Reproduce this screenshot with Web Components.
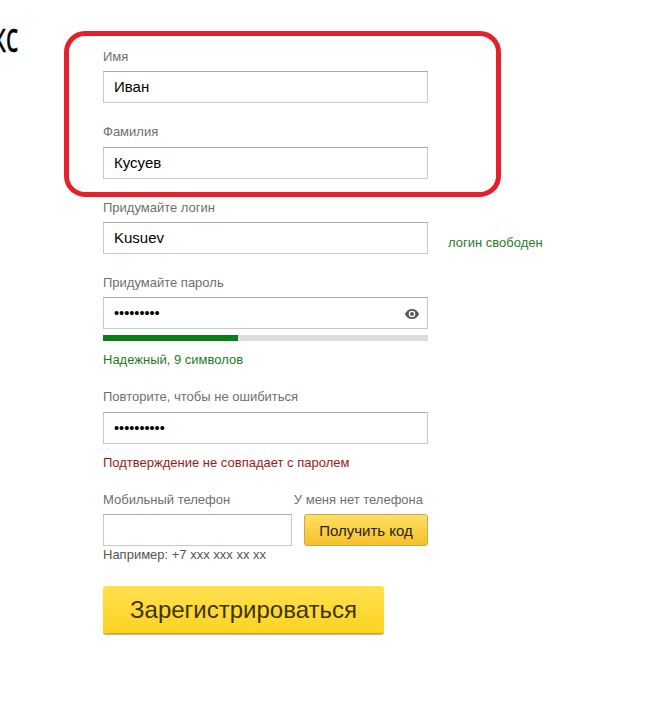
<!DOCTYPE html>
<html lang="ru">
<head>
<meta charset="utf-8">
<title>Регистрация</title>
<style>
html, body { margin: 0; padding: 0; background: #fff; overflow: hidden; }
body { font-family: "Liberation Sans", Arial, sans-serif; }
</style>
</head>
<body>
<reg-page>
  <reg-logo slot="logo">кс</reg-logo>

  <reg-highlight>
    <reg-field label="Имя" style="--top:0">Иван</reg-field>
    <reg-field label="Фамилия" style="--top:21px;--gap:7px">Кусуев</reg-field>
  </reg-highlight>

  <reg-field label="Придумайте логин" style="--top:21px" note="логин свободен">Kusuev</reg-field>

  <reg-field label="Придумайте пароль" style="--top:21px" eye type="password">•••••••••</reg-field>
  <reg-strength value="41.5">Надежный, 9 символов</reg-strength>

  <reg-field label="Повторите, чтобы не ошибиться" style="--top:21px;--gap:7px" type="password">••••••••••</reg-field>
  <reg-message>Подтверждение не совпадает с паролем</reg-message>

  <reg-phone></reg-phone>

  <reg-button>Зарегистрироваться</reg-button>
</reg-page>

<script>
class RegPage extends HTMLElement {
    constructor() {
        super();
        this.attachShadow({ mode: "open" }).innerHTML = `
        <style>
        :host{
            display:grid;
            grid-template-columns:103px 325px;
            width:670px;
            height:713px;
            box-sizing:border-box;
        }
        .form{
            padding-top:49px;
        }
        </style>
        <div><slot name="logo"></slot></div>
        <div class="form"><slot></slot></div>
        `;
    }
}
customElements.define("reg-page", RegPage);

class RegLogo extends HTMLElement {
    constructor() {
        super();
        this.attachShadow({ mode: "open" }).innerHTML = `
        <style>
        :host{
            display:block;
            width:30px;
            margin:13px 0 0 -7px;
            font:400 42px/46px "Open Sans", sans-serif;
            color:#000;
            transform:scaleX(.6);
            transform-origin:left top;
            white-space:nowrap;
            -webkit-text-stroke:.7px #000;
        }
        </style>
        <slot></slot>
        `;
    }
}
customElements.define("reg-logo", RegLogo);

class RegHighlight extends HTMLElement {
    constructor() {
        super();
        this.attachShadow({ mode: "open" }).innerHTML = `
        <style>
        :host{
            display:block;
            position:relative;
        }
        .frame{
            position:absolute;
            left:-39px;
            top:-18px;
            width:437px;
            height:166px;
            box-sizing:border-box;
            border:5px solid #e4202b;
            border-radius:21px;
            pointer-events:none;
        }
        </style>
        <slot></slot>
        <div class="frame"></div>
        `;
    }
}
customElements.define("reg-highlight", RegHighlight);

class RegField extends HTMLElement {
    constructor() {
        super();
        const eye = this.hasAttribute("eye") ? `
        <svg class="eye" width="14" height="10" viewBox="0 0 14 10">
            <path fill-rule="evenodd" fill="#555" d="M7 0C3.8 0 1.2 2 0 5c1.2 3 3.8 5 7 5s5.800-2 7-5c-1.200-3-3.800-5-7-5zm0 1.700a3.300 3.300 0 1 1 0 6.600 3.300 3.300 0 0 1 0-6.600z"/>
            <circle cx="7" cy="5" r="1.900" fill="#555"/>
        </svg>` : "";
        const note = this.getAttribute("note");
        this.attachShadow({ mode: "open" }).innerHTML = `
        <style>
        :host{
            display:block;
            margin-top:var(--top,0);
            width:325px;
            position:relative;
        }
        .label{
            font-size:13px;
            line-height:16px;
            height:16px;
            margin-bottom:var(--gap,6px);
            color:#6f6f6f;
        }
        .box{
            display:flex;
            align-items:center;
            justify-content:space-between;
            box-sizing:border-box;
            height:32px;
            padding:0 8px 1px 10px;
            border:1px solid #c8c8c8;
            border-top-color:#a8a8a8;
            font-size:15px;
            color:#000;
            background:#fff;
        }
        :host([type=password]) .box{
            font-size:14.5px;
            padding-bottom:0;
        }
        .eye{
            margin-top:1px;
        }
        .note{
            position:absolute;
            left:345px;
            top:35px;
            font-size:13px;
            line-height:16px;
            color:#2c7a2c;
            white-space:nowrap;
        }
        </style>
        <div class="label">${this.getAttribute("label")}</div>
        <div class="box"><span><slot></slot></span>${eye}</div>
        ${note ? `<div class="note">${note}</div>` : ""}
        `;
    }
}
customElements.define("reg-field", RegField);

class RegStrength extends HTMLElement {
    constructor() {
        super();
        this.attachShadow({ mode: "open" }).innerHTML = `
        <style>
        :host{
            display:block;
            margin-top:6px;
        }
        .track{
            height:6px;
            background:#dcdcdc;
        }
        .fill{
            height:100%;
            width:${this.getAttribute("value")}%;
            background:#0a7d16;
        }
        .text{
            margin-top:11px;
            font-size:13px;
            line-height:16px;
            color:#1f7a1f;
        }
        </style>
        <div class="track"><div class="fill"></div></div>
        <div class="text"><slot></slot></div>
        `;
    }
}
customElements.define("reg-strength", RegStrength);

class RegMessage extends HTMLElement {
    constructor() {
        super();
        this.attachShadow({ mode: "open" }).innerHTML = `
        <style>
        :host{
            display:block;
            margin-top:11px;
            font-size:13px;
            line-height:16px;
            color:#a01818;
        }
        </style>
        <slot></slot>
        `;
    }
}
customElements.define("reg-message", RegMessage);

class RegPhone extends HTMLElement {
    constructor() {
        super();
        this.attachShadow({ mode: "open" }).innerHTML = `
        <style>
        :host{
            display:block;
            margin-top:21px;
            font-size:13px;
            color:#6f6f6f;
        }
        .top{
            display:flex;
            justify-content:space-between;
            line-height:16px;
            height:16px;
            margin-bottom:6px;
            padding-right:5px;
        }
        .row{
            display:flex;
            justify-content:space-between;
        }
        .input{
            box-sizing:border-box;
            width:189px;
            height:32px;
            border:1px solid #c8c8c8;
            border-top-color:#a8a8a8;
        }
        .code{
            box-sizing:border-box;
            width:124px;
            height:32px;
            display:flex;
            align-items:center;
            justify-content:center;
            border:1px solid #c9a850;
            border-radius:3px;
            background:linear-gradient(#fde063,#f6bf2c);
            font-size:15px;
            color:#2b2208;
        }
        .hint{
            margin-top:1px;
            line-height:16px;
            color:#555;
        }
        </style>
        <div class="top"><span>Мобильный телефон</span><span>У меня нет телефона</span></div>
        <div class="row"><div class="input"></div><div class="code">Получить код</div></div>
        <div class="hint">Например: +7 xxx xxx xx xx</div>
        `;
    }
}
customElements.define("reg-phone", RegPhone);

class RegButton extends HTMLElement {
    constructor() {
        super();
        this.attachShadow({ mode: "open" }).innerHTML = `
        <style>
        :host{
            display:flex;
            align-items:center;
            justify-content:center;
            box-sizing:border-box;
            width:281px;
            height:48px;
            margin-top:23px;
            border-radius:3px;
            border-bottom:1px solid #c9a22a;
            background:linear-gradient(#ffe14f,#fdd321);
            box-shadow:0 1px 1px rgba(120,90,0,.45);
            font-size:24px;
            color:#3f3305;
        }
        </style>
        <slot></slot>
        `;
    }
}
customElements.define("reg-button", RegButton);
</script>
</body>
</html>
